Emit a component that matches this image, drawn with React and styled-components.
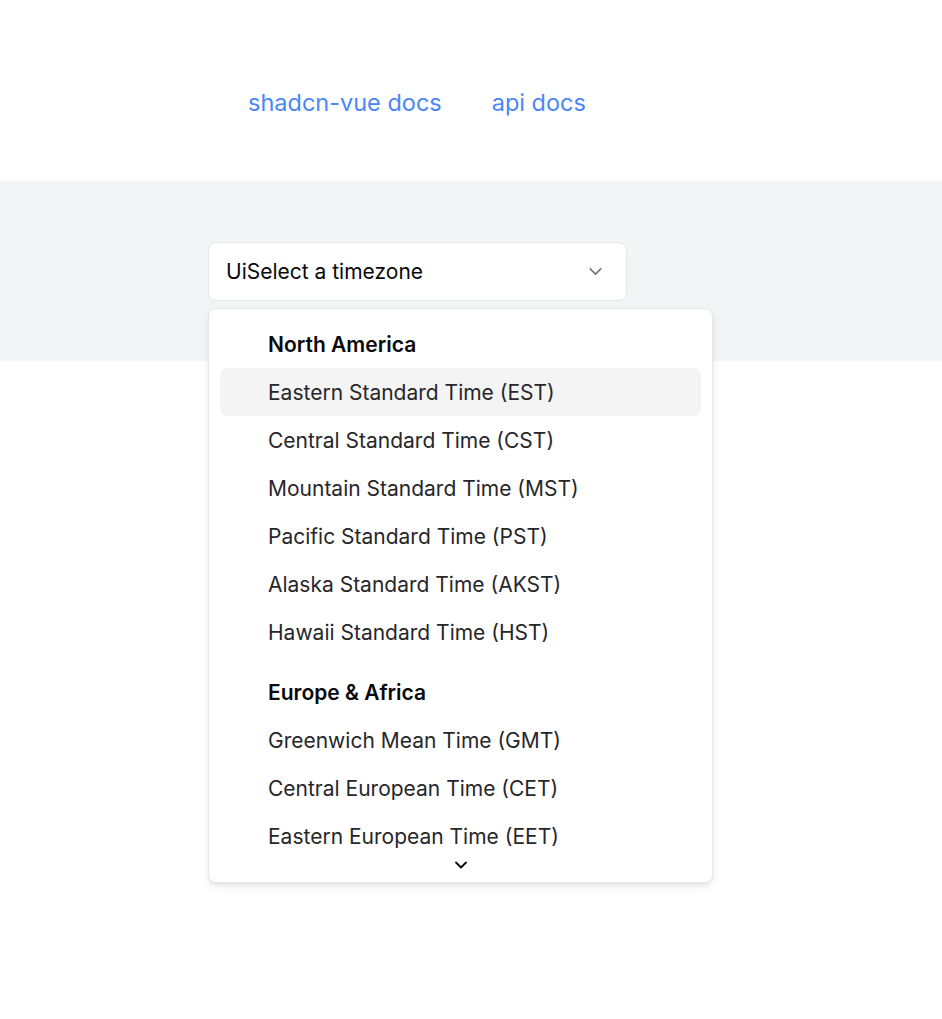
import React from "react";
import styled, { createGlobalStyle } from "styled-components";

const Global = createGlobalStyle`
  html, body { margin: 0; padding: 0; background: #fff; }
  body { font-family: Inter, "Noto Sans", sans-serif; color: #09090b; }
`;

const Page = styled.div`
  display: flex;
  flex-direction: column;
  min-height: 1019px;
`;

const Nav = styled.nav`
  height: 181px;
  display: flex;
  align-items: flex-start;
  padding: 86px 0 0 248px;
  gap: 50px;
  box-sizing: border-box;
`;

const DocLink = styled.a`
  color: #4a86f7;
  font-size: 23.5px;
  line-height: 34px;
  text-decoration: none;
`;

const Band = styled.section`
  background: #f3f4f6;
  height: 180px;
  padding: 61px 0 0 208px;
  box-sizing: border-box;
`;

const SelectWrap = styled.div`
  position: relative;
  width: 419px;
`;

const Trigger = styled.button`
  width: 419px;
  height: 59px;
  background: #fff;
  border: 1px solid #e5e7eb;
  border-radius: 8px;
  display: flex;
  align-items: center;
  justify-content: space-between;
  padding: 0 20px 0 17px;
  box-sizing: border-box;
  font-family: inherit;
  font-size: 21px;
  color: #09090b;
  cursor: pointer;
`;

const Content = styled.div`
  position: absolute;
  top: 66px;
  left: 0;
  width: 505px;
  background: #fff;
  border: 1px solid #e5e7eb;
  border-radius: 8px;
  box-shadow: 0 4px 8px -1px rgba(0,0,0,0.1), 0 2px 4px -2px rgba(0,0,0,0.08);
  box-sizing: border-box;
  padding: 11px 11px 5px;
  z-index: 10;
`;

const Viewport = styled.div`
  height: 533px;
  overflow: hidden;
`;

const Group = styled.div`
  & + & { margin-top: 12px; }
`;

const Label = styled.div`
  height: 48px;
  display: flex;
  align-items: center;
  padding-left: 48px;
  font-size: 21px;
  font-weight: 600;
  color: #09090b;
`;

const Item = styled.div`
  height: 48px;
  display: flex;
  align-items: center;
  padding-left: 48px;
  font-size: 21px;
  color: #27272a;
  border-radius: 8px;
  white-space: nowrap;
  background: ${(p) => (p.$active ? "#f4f4f5" : "transparent")};
`;

const ScrollDown = styled.div`
  height: 24px;
  display: flex;
  align-items: center;
  justify-content: center;
`;

const Chevron = ({ color, w = 15, sw = 2.2 }) => (
  <svg width={w} height={w} viewBox="0 0 24 24" fill="none" stroke={color} strokeWidth={sw} strokeLinecap="round" strokeLinejoin="round">
    <path d="m6 9 6 6 6-6" />
  </svg>
);

const groups = [
  {
    label: "North America",
    items: [
      "Eastern Standard Time (EST)",
      "Central Standard Time (CST)",
      "Mountain Standard Time (MST)",
      "Pacific Standard Time (PST)",
      "Alaska Standard Time (AKST)",
      "Hawaii Standard Time (HST)",
    ],
  },
  {
    label: "Europe & Africa",
    items: [
      "Greenwich Mean Time (GMT)",
      "Central European Time (CET)",
      "Eastern European Time (EET)",
    ],
  },
];

export default function App() {
  return (
    <Page>
      <Global />
      <Nav>
        <DocLink href="#">shadcn-vue docs</DocLink>
        <DocLink href="#">api docs</DocLink>
      </Nav>
      <Band>
        <SelectWrap>
          <Trigger>
            <span>UiSelect a timezone</span>
            <Chevron color="#71717a" w={21} sw={1.8} />
          </Trigger>
          <Content>
            <Viewport>
              {groups.map((g) => (
                <Group key={g.label}>
                  <Label>{g.label}</Label>
                  {g.items.map((it, i) => (
                    <Item key={it} $active={g.label === "North America" && i === 0}>{it}</Item>
                  ))}
                </Group>
              ))}
            </Viewport>
            <ScrollDown>
              <Chevron color="#09090b" w={20} />
            </ScrollDown>
          </Content>
        </SelectWrap>
      </Band>
    </Page>
  );
}
